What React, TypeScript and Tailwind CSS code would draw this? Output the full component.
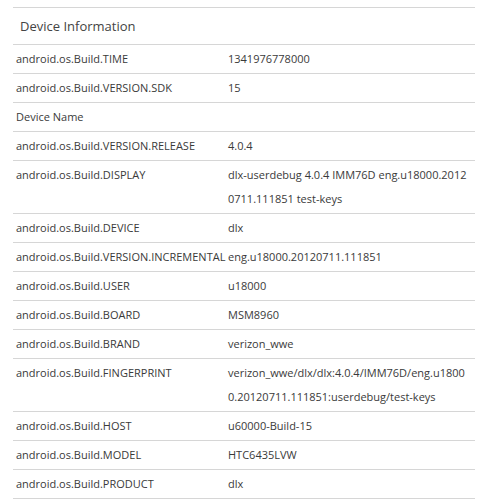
const rows: [string, string][] = [
  ["android.os.Build.TIME", "1341976778000"],
  ["android.os.Build.VERSION.SDK", "15"],
  ["Device Name", ""],
  ["android.os.Build.VERSION.RELEASE", "4.0.4"],
  ["android.os.Build.DISPLAY", "dlx-userdebug 4.0.4 IMM76D eng.u18000.20120711.111851 test-keys"],
  ["android.os.Build.DEVICE", "dlx"],
  ["android.os.Build.VERSION.INCREMENTAL", "eng.u18000.20120711.111851"],
  ["android.os.Build.USER", "u18000"],
  ["android.os.Build.BOARD", "MSM8960"],
  ["android.os.Build.BRAND", "verizon_wwe"],
  [
    "android.os.Build.FINGERPRINT",
    "verizon_wwe/dlx/dlx:4.0.4/IMM76D/eng.u18000.20120711.111851:userdebug/test-keys",
  ],
  ["android.os.Build.HOST", "u60000-Build-15"],
  ["android.os.Build.MODEL", "HTC6435LVW"],
  ["android.os.Build.PRODUCT", "dlx"],
];

export default function App() {
  return (
    <div className="min-h-[503px] bg-white pt-[7px] font-['Open_Sans',sans-serif]">
      <div className="ml-[13px] w-[462px] border-t border-[#d6d6d6]">
        <h2 className="h-[36px] pl-[7px] text-[13px] leading-[36px] text-[#444]">Device Information</h2>
        <div className="border-b border-[#d6d6d6]">
          {rows.map(([label, value]) => (
            <div
              key={label}
              className="flex border-t border-[#d6d6d6] py-[2px] text-[11px] leading-[24px] text-[#3a3a3a]"
            >
              <div className="min-w-[215px] shrink-0 whitespace-nowrap pl-[3px] pr-[2px]">{label}</div>
              <div className="min-w-0 flex-1 break-all pr-[6px]">{value}</div>
            </div>
          ))}
        </div>
      </div>
    </div>
  );
}
